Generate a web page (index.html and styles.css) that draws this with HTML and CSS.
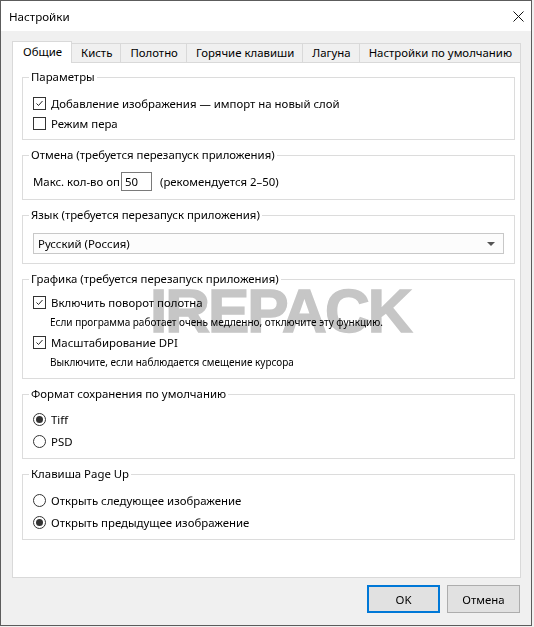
FILE: index.html
```html
<!DOCTYPE html>
<html lang="ru">
<head>
<meta charset="utf-8">
<title>Настройки</title>
<link rel="stylesheet" href="styles.css">
</head>
<body>
<div class="window">
  <div class="titlebar">
    <span class="title">Настройки</span>
    <span class="close"><svg width="11" height="11" viewBox="0 0 11 11"><path d="M0.5 0.5L10.5 10.5M10.5 0.5L0.5 10.5" stroke="#111" stroke-width="1"/></svg></span>
  </div>
  <div class="client">
    <div class="tabs">
      <div class="tab active">Общие</div>
      <div class="tab">Кисть</div>
      <div class="tab">Полотно</div>
      <div class="tab">Горячие клавиши</div>
      <div class="tab">Лагуна</div>
      <div class="tab">Настройки по умолчанию</div>
    </div>
    <div class="panel">
      <fieldset class="group g1">
        <legend>Параметры</legend>
        <div class="row"><span class="cb"><svg width="9" height="9" viewBox="0 0 9 9"><path d="M1.5 4.5L3.5 6.5L7.5 2" fill="none" stroke="#222" stroke-width="1"/></svg></span>Добавление изображения — импорт на новый слой</div>
        <div class="row"><span class="cb"></span>Режим пера</div>
      </fieldset>
      <fieldset class="group g2">
        <legend>Отмена (требуется перезапуск приложения)</legend>
        <div class="row row-input">
          <span class="field-label">Макс. кол-во оп</span>
          <span class="spin">50</span>
          <span class="hint">(рекомендуется 2–50)</span>
        </div>
      </fieldset>
      <fieldset class="group g3">
        <legend>Язык (требуется перезапуск приложения)</legend>
        <div class="combo"><span>Русский (Россия)</span><span class="arrow"></span></div>
      </fieldset>
      <fieldset class="group g4">
        <legend>Графика (требуется перезапуск приложения)</legend>
        <div class="row"><span class="cb"><svg width="9" height="9" viewBox="0 0 9 9"><path d="M1.5 4.5L3.5 6.5L7.5 2" fill="none" stroke="#222" stroke-width="1"/></svg></span>Включить поворот полотна</div>
        <div class="note">Если программа работает очень медленно, отключите эту функцию.</div>
        <div class="row"><span class="cb"><svg width="9" height="9" viewBox="0 0 9 9"><path d="M1.5 4.5L3.5 6.5L7.5 2" fill="none" stroke="#222" stroke-width="1"/></svg></span>Масштабирование DPI</div>
        <div class="note note-last">Выключите, если наблюдается смещение курсора</div>
      </fieldset>
      <fieldset class="group g5">
        <legend>Формат сохранения по умолчанию</legend>
        <div class="row row-radio"><span class="rb on"></span>Tiff</div>
        <div class="row row-radio"><span class="rb"></span>PSD</div>
      </fieldset>
      <fieldset class="group g6">
        <legend>Клавиша Page Up</legend>
        <div class="row row-radio"><span class="rb"></span>Открыть следующее изображение</div>
        <div class="row row-radio"><span class="rb on"></span>Открыть предыдущее изображение</div>
      </fieldset>
      <div class="watermark">IREPACK</div>
    </div>
    <div class="buttons">
      <button class="btn btn-default">OK</button>
      <button class="btn">Отмена</button>
    </div>
  </div>
</div>
</body>
</html>
```

FILE: styles.css
```css
* { box-sizing: border-box; }
html, body { margin: 0; padding: 0; background: #f0f0f0; }
body {
  font-family: "Noto Sans", "Liberation Sans", sans-serif;
  font-size: 11.4px;
  color: #000;
}
.window {
  width: 532px;
  height: 626px;
  border: 1px solid #5c5c5c;
  background: #f0f0f0;
  display: flex;
  flex-direction: column;
}
.titlebar {
  height: 30px;
  background: #fff;
  display: flex;
  align-items: center;
  justify-content: space-between;
  padding: 0 7px 0 8px;
}
.title { font-size: 11.6px; }
.close { display: flex; }
.client {
  padding: 10px 10px 0 11px;
  display: flex;
  flex-direction: column;
}
.tabs {
  display: flex;
  align-items: flex-end;
  height: 21px;
  position: relative;
  z-index: 1;
}
.tab {
  height: 19px;
  padding: 0 8px 0 9px;
  border: 1px solid #d9d9d9;
  border-bottom: none;
  background: #f0f0f0;
  display: flex;
  align-items: center;
  margin-left: -1px;
  line-height: 1;
  white-space: nowrap;
  flex: none;
}
.tab:first-child { margin-left: 0; }
.tab.active {
  height: 22px;
  background: #fff;
  margin-bottom: -1px;
  padding: 4px 9px 0 10px;
  align-items: flex-start;
  margin-right: -1px;
  position: relative;
  z-index: 2;
}
.tab.active + .tab { margin-left: 0; }
.panel {
  position: relative;
  height: 516px;
  background: #fff;
  border: 1px solid #d9d9d9;
  padding: 7px 5px 0 9px;
  display: flex;
  flex-direction: column;
  gap: 8px;
}
.group {
  margin: 0;
  border: 1px solid #dcdcdc;
  padding: 0 10px;
  min-width: 0;
}
.group legend {
  padding: 0 2px;
  margin-left: -4px;
  line-height: 14px;
  height: 14px;
}
.g1 { padding-top: 9px; padding-bottom: 6px; }
.g2 { padding-top: 8px; padding-bottom: 7px; }
.g3 { padding-top: 11px; padding-bottom: 9px; }
.g4 { padding-top: 6px; padding-bottom: 7px; }
.g5 { padding-top: 7px; padding-bottom: 6px; }
.g6 { padding-top: 8px; padding-bottom: 6px; }
.row {
  height: 20px;
  display: flex;
  align-items: center;
  gap: 4px;
  white-space: nowrap;
}
.row-radio { height: 22px; }
.cb {
  width: 13px;
  height: 13px;
  border: 1px solid #333;
  background: #fff;
  display: flex;
  align-items: center;
  justify-content: center;
  flex: none;
  margin-right: 1px;
}
.rb {
  width: 13px;
  height: 13px;
  border: 1px solid #333;
  border-radius: 50%;
  background: #fff;
  flex: none;
  display: flex;
  align-items: center;
  justify-content: center;
  margin-right: 1px;
}
.rb.on::after {
  content: "";
  width: 7px;
  height: 7px;
  border-radius: 50%;
  background: #333;
}
.note {
  height: 20px;
  display: flex;
  align-items: center;
  padding-left: 17px;
  font-size: 10px;
  white-space: nowrap;
}
.note-last { height: 19px; }
.row-input { height: 22px; gap: 0; }
.field-label { width: 88px; flex: none; }
.spin {
  width: 31px;
  height: 19px;
  border: 1px solid #7a7a7a;
  padding-left: 3px;
  display: flex;
  align-items: center;
  margin-right: 8px;
  flex: none;
}
.combo {
  height: 21px;
  border: 1px solid #c8c8c8;
  background: #fcfcfc;
  display: flex;
  align-items: center;
  justify-content: space-between;
  padding: 0 8px 0 4px;
}
.arrow {
  width: 0;
  height: 0;
  border-left: 4px solid transparent;
  border-right: 4px solid transparent;
  border-top: 4px solid #555;
}
.watermark {
  position: absolute;
  left: 137px;
  top: 217px;
  font-family: "Liberation Sans", sans-serif;
  font-weight: bold;
  font-size: 62px;
  line-height: 62px;
  letter-spacing: -2px;
  color: #c6c6c6;
  -webkit-text-stroke: 1.5px #c6c6c6;
  mix-blend-mode: multiply;
  pointer-events: none;
}
.buttons {
  display: flex;
  justify-content: flex-end;
  gap: 7px;
  margin-top: 7px;
  padding-right: 1px;
}
.btn {
  width: 73px;
  height: 28px;
  border: 1px solid #adadad;
  background: #e1e1e1;
  font-family: inherit;
  font-size: 11.4px;
  color: #000;
  padding: 0;
}
.btn-default {
  border: 2px solid #0078d7;
}
```
